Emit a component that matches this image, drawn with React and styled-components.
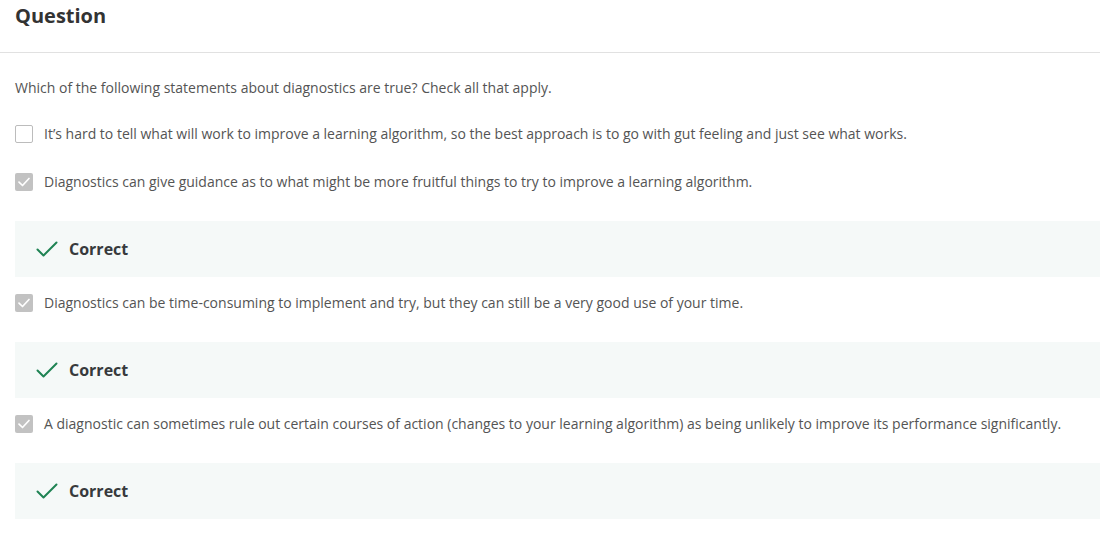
import React from "react";
import styled, { createGlobalStyle } from "styled-components";

const Global = createGlobalStyle`
  body { margin: 0; background: #fff; font-family: "Open Sans", sans-serif; }
`;

const Page = styled.div`
  width: 1100px;
`;

const Header = styled.div`
  height: 53px;
  box-sizing: border-box;
  padding: 2px 15px 0;
  border-bottom: 1px solid #e1e1e1;
`;

const Title = styled.h2`
  margin: 0;
  font-size: 20px;
  line-height: 28px;
  font-weight: 700;
  color: #333333;
`;

const Body = styled.div`
  padding: 23px 0 0 15px;
`;

const Prompt = styled.p`
  margin: 0 0 25px;
  font-size: 14px;
  line-height: 24px;
  color: #545454;
`;

const Option = styled.div`
  display: flex;
  align-items: center;
  gap: 11px;
  height: 18px;
  margin-bottom: 30px;
`;

const Box = styled.span`
  width: 18px;
  height: 18px;
  box-sizing: border-box;
  border-radius: 2px;
  flex-shrink: 0;
  display: flex;
  align-items: center;
  justify-content: center;
  border: ${(p) => (p.$checked ? "none" : "1.5px solid #bcbcbc")};
  background: ${(p) => (p.$checked ? "#c2c2c2" : "#fff")};
`;

const Label = styled.span`
  font-size: 14px;
  line-height: 18px;
  color: #545454;
`;

const Feedback = styled.div`
  display: flex;
  align-items: center;
  gap: 11px;
  height: 56px;
  padding-left: 21px;
  background: #f5f9f8;
  margin: 1px 0 17px;
`;

const FeedbackText = styled.span`
  font-size: 16px;
  font-weight: 700;
  color: #373a3c;
`;

const Tick = () => (
  <svg width="14" height="14" viewBox="0 0 14 14" fill="none">
    <path d="M2 7.2 L5.5 10.5 L12 3.5" stroke="#fff" strokeWidth="1.7" strokeLinecap="round" strokeLinejoin="round" />
  </svg>
);

const BigTick = () => (
  <svg width="22" height="18" viewBox="0 0 22 18" fill="none">
    <path d="M1.5 9.5 L7.5 15.5 L20.5 2.5" stroke="#1f8354" strokeWidth="2" strokeLinecap="round" strokeLinejoin="round" />
  </svg>
);

const options = [
  { text: "It’s hard to tell what will work to improve a learning algorithm, so the best approach is to go with gut feeling and just see what works.", checked: false },
  { text: "Diagnostics can give guidance as to what might be more fruitful things to try to improve a learning algorithm.", checked: true },
  { text: "Diagnostics can be time-consuming to implement and try, but they can still be a very good use of your time.", checked: true },
  { text: "A diagnostic can sometimes rule out certain courses of action (changes to your learning algorithm) as being unlikely to improve its performance significantly.", checked: true },
];

export default function App() {
  return (
    <Page>
      <Global />
      <Header>
        <Title>Question</Title>
      </Header>
      <Body>
        <Prompt>Which of the following statements about diagnostics are true? Check all that apply.</Prompt>
        {options.map((o, i) => (
          <React.Fragment key={i}>
            <Option>
              <Box $checked={o.checked}>{o.checked && <Tick />}</Box>
              <Label>{o.text}</Label>
            </Option>
            {o.checked && (
              <Feedback>
                <BigTick />
                <FeedbackText>Correct</FeedbackText>
              </Feedback>
            )}
          </React.Fragment>
        ))}
      </Body>
    </Page>
  );
}
